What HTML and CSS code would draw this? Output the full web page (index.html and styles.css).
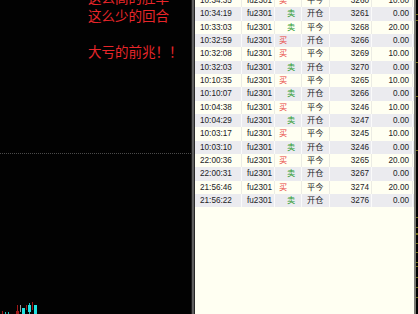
FILE: index.html
```html
<!DOCTYPE html>
<html lang="zh">
<head>
<meta charset="utf-8">
<link rel="stylesheet" href="styles.css">
</head>
<body>
<div class="screen">
  <div class="chart">
    <div class="note">
      <div>这么高的胜率</div>
      <div>这么少的回合</div>
      <div>&nbsp;</div>
      <div>大亏的前兆！！</div>
    </div>
    <div class="dotline"></div>
    <svg class="candles" width="40" height="12" viewBox="0 0 40 12">
      <rect x="2" y="9" width="1" height="3" fill="#a01818"/>
      <rect x="5" y="10" width="1" height="2" fill="#1fb8b8"/>
      <rect x="8" y="10" width="1" height="2" fill="#1fb8b8"/>
      <rect x="17" y="3" width="1" height="9" fill="#a01818"/>
      <rect x="16.5" y="9.5" width="2" height="3" fill="none" stroke="#a01818" stroke-width="1"/>
      <rect x="20" y="3" width="1" height="7" fill="#9a9a9a"/>
      <rect x="22" y="6" width="3" height="6" fill="#22e0e0"/>
      <rect x="26" y="3" width="1" height="5" fill="#a01818"/>
      <rect x="29" y="1" width="1" height="11" fill="#1fb8b8"/>
      <rect x="28" y="3" width="3" height="7" fill="#22e0e0"/>
      <rect x="32" y="0" width="1" height="8" fill="#a01818"/>
      <rect x="34" y="3" width="3" height="9" fill="#22e0e0"/>
    </svg>
  </div>
  <div class="divider"></div>
  <div class="panel">
    <div class="rows">
      <div class="row"><span>10:34:35</span><span>fu2301</span><span class="buy">买</span><span>平今</span><span class="num">3260</span><span class="num">10.00</span></div>
      <div class="row alt"><span>10:34:19</span><span>fu2301</span><span class="sell">卖</span><span>开仓</span><span class="num">3261</span><span class="num">0.00</span></div>
      <div class="row"><span>10:33:03</span><span>fu2301</span><span class="sell">卖</span><span>平今</span><span class="num">3268</span><span class="num">20.00</span></div>
      <div class="row alt"><span>10:32:59</span><span>fu2301</span><span class="buy">买</span><span>开仓</span><span class="num">3266</span><span class="num">0.00</span></div>
      <div class="row"><span>10:32:08</span><span>fu2301</span><span class="buy">买</span><span>平今</span><span class="num">3269</span><span class="num">10.00</span></div>
      <div class="row alt"><span>10:32:03</span><span>fu2301</span><span class="sell">卖</span><span>开仓</span><span class="num">3270</span><span class="num">0.00</span></div>
      <div class="row"><span>10:10:35</span><span>fu2301</span><span class="buy">买</span><span>平今</span><span class="num">3265</span><span class="num">10.00</span></div>
      <div class="row alt"><span>10:10:07</span><span>fu2301</span><span class="sell">卖</span><span>开仓</span><span class="num">3266</span><span class="num">0.00</span></div>
      <div class="row"><span>10:04:38</span><span>fu2301</span><span class="buy">买</span><span>平今</span><span class="num">3246</span><span class="num">10.00</span></div>
      <div class="row alt"><span>10:04:29</span><span>fu2301</span><span class="sell">卖</span><span>开仓</span><span class="num">3247</span><span class="num">0.00</span></div>
      <div class="row"><span>10:03:17</span><span>fu2301</span><span class="buy">买</span><span>平今</span><span class="num">3245</span><span class="num">10.00</span></div>
      <div class="row alt"><span>10:03:10</span><span>fu2301</span><span class="sell">卖</span><span>开仓</span><span class="num">3246</span><span class="num">0.00</span></div>
      <div class="row"><span>22:00:36</span><span>fu2301</span><span class="buy">买</span><span>平今</span><span class="num">3265</span><span class="num">20.00</span></div>
      <div class="row alt"><span>22:00:31</span><span>fu2301</span><span class="sell">卖</span><span>开仓</span><span class="num">3267</span><span class="num">0.00</span></div>
      <div class="row"><span>21:56:46</span><span>fu2301</span><span class="buy">买</span><span>平今</span><span class="num">3274</span><span class="num">20.00</span></div>
      <div class="row alt"><span>21:56:22</span><span>fu2301</span><span class="sell">卖</span><span>开仓</span><span class="num">3276</span><span class="num">0.00</span></div>
    </div>
  </div>
  <div class="edge"></div>
  <svg class="strip" width="2" height="314" viewBox="0 0 2 314">
    <g fill="#6e6a12">
      <rect x="0" y="14" width="2" height="1"/>
      <rect x="0" y="20" width="2" height="1"/>
      <rect x="0" y="62" width="2" height="1"/>
      <rect x="0" y="96" width="2" height="1"/>
      <rect x="0" y="150" width="2" height="1"/>
      <rect x="0" y="217" width="2" height="1"/>
      <rect x="0" y="227" width="2" height="1"/>
      <rect x="0" y="233" width="2" height="2"/>
      <rect x="0" y="243" width="2" height="1"/>
      <rect x="0" y="252" width="2" height="1"/>
      <rect x="0" y="262" width="2" height="1"/>
      <rect x="0" y="266" width="2" height="1"/>
      <rect x="0" y="277" width="2" height="1"/>
      <rect x="0" y="287" width="2" height="1"/>
      <rect x="0" y="297" width="2" height="1"/>
    </g>
  </svg>
</div>
</body>
</html>
```

FILE: styles.css
```css
html, body {
  margin: 0;
  padding: 0;
  background: #000;
}

.screen {
  display: flex;
  width: 418px;
  height: 314px;
  overflow: hidden;
  background: #000;
}

.chart {
  width: 191px;
  flex: none;
  display: flex;
  flex-direction: column;
  background: #020202;
}

.note {
  margin-top: -12.5px;
  padding-left: 88px;
  color: #e8262a;
  font-family: "Noto Sans CJK SC", "Liberation Sans", sans-serif;
  font-size: 13.5px;
  line-height: 18.33px;
  white-space: nowrap;
}

.dotline {
  margin-top: 92px;
  height: 0;
  border-top: 1px dotted #4a4a4a;
}

.candles {
  margin-top: auto;
  display: block;
}

.divider {
  width: 2px;
  flex: none;
  background: #5e5e5e;
  border-left: 1px solid #1c1c1c;
  border-right: 1px solid #262626;
}

.panel {
  width: 219px;
  flex: none;
  background: #fffff2;
  overflow: hidden;
}

.rows {
  margin-top: -6px;
}

.row {
  display: grid;
  grid-template-columns: 47px 33px 27px 28px 42px 41px;
  height: 13.33px;
  line-height: 13.33px;
  font-family: "Liberation Sans", "Noto Sans CJK SC", sans-serif;
  font-size: 8.2px;
  color: #222226;
  background: #fffff2;
}

.row.alt {
  background: #ebebef;
}

.row span {
  border-right: 1px solid #ececE4;
  padding-left: 5px;
  white-space: nowrap;
  overflow: hidden;
}

.row.alt span {
  border-right-color: #fafafa;
}

.row span.num {
  text-align: right;
  padding-left: 0;
  padding-right: 2px;
}

.row span.num:last-child {
  padding-right: 3px;
}

.row span.buy {
  color: #e8403a;
  padding-left: 4px;
}

.row span.sell {
  color: #2a9a30;
  padding-left: 12px;
}

.edge {
  width: 2px;
  flex: none;
  background: #7a7a74;
}

.strip {
  display: block;
  flex: none;
  background: #000;
}
```
